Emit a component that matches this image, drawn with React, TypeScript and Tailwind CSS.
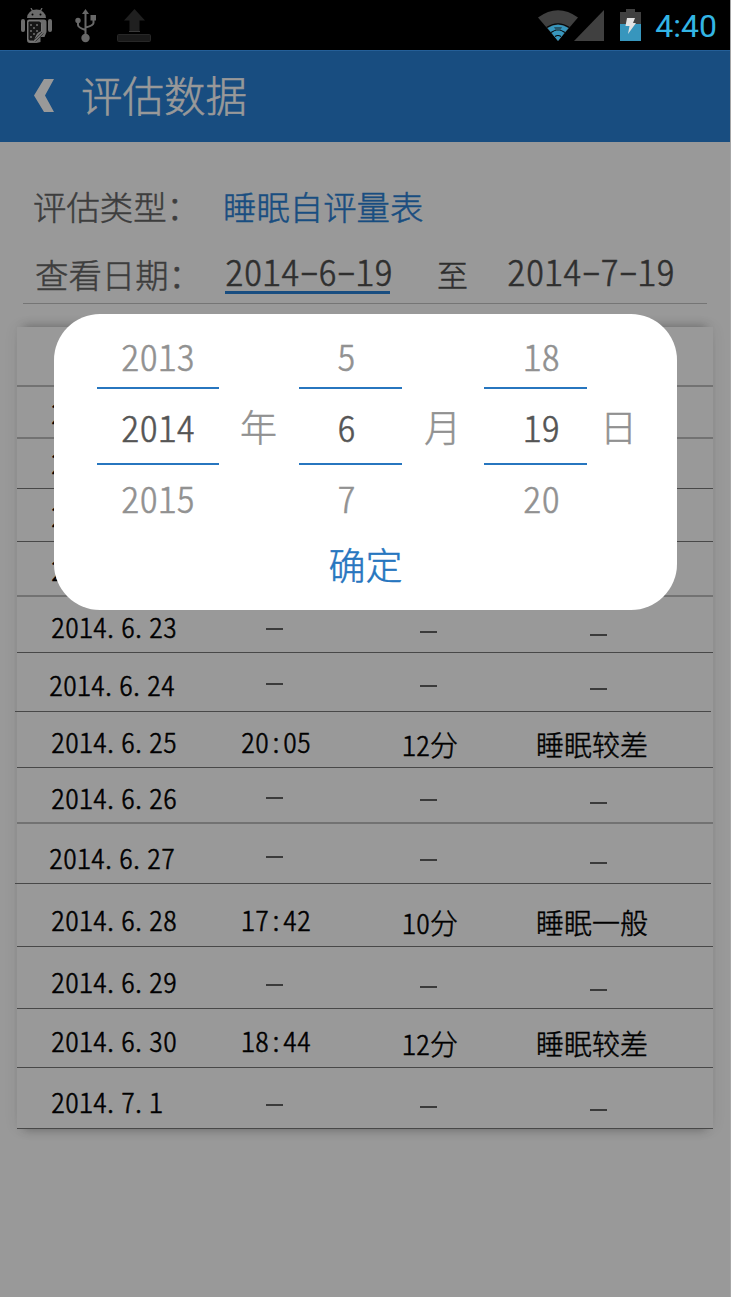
import React from "react";

const TEXT = "[font-family:'Noto_Sans_CJK_SC',sans-serif]";

function Android() {
  return (
    <svg width="32" height="36" viewBox="0 0 32 36">
      <g fill="#6c6c6c">
        <path d="M6 10a9.500 8.500 0 0 1 19 0z" />
        <rect x="0" y="11" width="4" height="13" rx="2" />
        <rect x="27" y="11" width="4" height="13" rx="2" />
        <path d="M8 11.500h15a2.500 2.500 0 0 1 2.500 2.500v10l-2 5h-4v5l-4 1H9a3 3 0 0 1-3-3V13.500a2 2 0 0 1 2-2z" />
      </g>
      <path d="M10 0l2 4M21 0l-2 4" stroke="#6c6c6c" strokeWidth="1.3" />
      <path d="M8.500 13h9.500q2.500 0 2.500 2.500v8q-4 1-5 4t-2.500 5.500H9q-2 0-2-2V14.500q0-1.500 1.500-1.500z" fill="#161616" stroke="#858585" strokeWidth="0.800" />
      <path d="M9 17h2m4 0h2m-5 3h2m-5 3h2m4 0h2m-5 3h2m-5 3h2" stroke="#707070" strokeWidth="1.500" />
      <path d="M12 33l9-9M14.500 33.500l8-8" stroke="#3a3a3a" strokeWidth="1" />
      <circle cx="11.500" cy="6.500" r="1" fill="#000" /><circle cx="19.500" cy="6.500" r="1" fill="#000" />
    </svg>
  );
}

function Usb() {
  return (
    <svg width="22" height="34" viewBox="0 0 22 34" fill="none" stroke="#686868" strokeWidth="2">
      <path d="M10.500 4v24M3 12v4q0 2.500 7.500 5M18.500 9v5q0 2.500-8 4.500" />
      <path d="M10.500 0l3.500 5H7z" fill="#686868" stroke="none" />
      <circle cx="3" cy="11.500" r="2.700" fill="#686868" stroke="none" />
      <rect x="15.500" y="6" width="5.500" height="5.500" fill="#686868" stroke="none" />
      <circle cx="10.500" cy="29" r="4.200" fill="#686868" stroke="none" />
    </svg>
  );
}

function Upload() {
  return (
    <svg width="34" height="34" viewBox="0 0 34 34">
      <path d="M17.500 0l10.500 11.500H22.500v10.500H12.500V11.500H7z" fill="#202020" />
      <path d="M12 22.500h11" stroke="#3a3a3a" />
      <rect x="0.500" y="25.500" width="33" height="7" rx="1" fill="#1a1a1a" stroke="#272727" />
    </svg>
  );
}

function Wifi() {
  return (
    <svg width="40" height="32" viewBox="0 0 40 32">
      <path d="M0 7.500Q20-7 40 7.500L20 31z" fill="#404040" />
      <path d="M9.500 18Q20 11 30.500 18L20 31z" fill="#3796bd" />
      <path d="M8.500 17.500Q20 10 31.500 17.500M13 22.500Q20 17.500 27 22.500M17 26.500q3-2 6 0" fill="none" stroke="#05080a" strokeWidth="1.200" />
      <path d="M16 17l8 0-2 4h-4z" fill="#26566a" />
    </svg>
  );
}

function Battery() {
  return (
    <svg width="22" height="33" viewBox="0 0 22 33">
      <path d="M0 3h6V0h9v3h6v13H0z" fill="#404040" />
      <path d="M0 15h21v17H0z" fill="#3796bd" />
      <path d="M7 9h8l-2 5h3L8 25l1.500-8H5.500z" fill="#e3e3e3" />
    </svg>
  );
}

type Row = { h: string; pad: string; line: string; shift?: string; date: string; time?: string; mins?: string; result?: string; d: [string, string, string] };

const rows: Row[] = [
  { h: "h-[52px]", pad: "pt-[4px]", line: "border-b-2 border-[#727272]", date: "2014.6.19", d: ["", "", ""] },
  { h: "h-[50px]", pad: "pt-[2px]", line: "border-b border-[#484848]", date: "2014.6.20", d: ["", "", ""] },
  { h: "h-[53px]", pad: "pt-[5px]", line: "border-b border-[#484848]", date: "2014.6.21", d: ["", "", ""] },
  { h: "h-[55px]", pad: "pt-[6px]", line: "border-b-2 border-[#727272]", date: "2014.6.22", d: ["", "", ""] },
  { h: "h-[56px]", pad: "pt-[8px]", line: "border-b border-[#484848]", date: "2014.6.23", d: ["mt-[31px]", "mt-[34px]", "mt-[37px]"] },
  { h: "h-[59px]", pad: "pt-[10px]", line: "border-b border-[#484848]", shift: "-ml-[2px] mr-[2px]", date: "2014.6.24", d: ["mt-[30px]", "mt-[32px]", "mt-[35px]"] },
  { h: "h-[56px]", pad: "pt-[8px]", line: "border-b border-[#484848]", date: "2014.6.25", time: "20:05", mins: "12分", result: "睡眠较差", d: ["", "", ""] },
  { h: "h-[56px]", pad: "pt-[8px]", line: "border-b-2 border-[#727272]", date: "2014.6.26", d: ["mt-[29px]", "mt-[31px]", "mt-[34px]"] },
  { h: "h-[60px]", pad: "pt-[12px]", line: "border-b border-[#484848]", shift: "-ml-[2px] mr-[2px]", date: "2014.6.27", d: ["mt-[32px]", "mt-[35px]", "mt-[38px]"] },
  { h: "h-[63px]", pad: "pt-[14px]", line: "border-b border-[#484848]", date: "2014.6.28", time: "17:42", mins: "10分", result: "睡眠一般", d: ["", "", ""] },
  { h: "h-[62px]", pad: "pt-[13px]", line: "border-b border-[#484848]", date: "2014.6.29", d: ["mt-[37px]", "mt-[39px]", "mt-[42px]"] },
  { h: "h-[59px]", pad: "pt-[10px]", line: "border-b border-[#484848]", date: "2014.6.30", time: "18:44", mins: "12分", result: "睡眠较差", d: ["", "", ""] },
  { h: "h-[61px]", pad: "pt-[12px]", line: "border-b border-[#484848]", date: "2014.7.1", d: ["mt-[36px]", "mt-[38px]", "mt-[41px]"] },
];

function Dash({ offset }: { offset: string }) {
  return offset ? <span className={`block h-[2px] w-[17px] bg-[#3b3b3b] ${offset}`} /> : null;
}

// Full stops sit toward the left of a half-width cell.
function DottedDate({ value }: { value: string }) {
  return (
    <>
      {value.split(".").map((part, i) => (
        <React.Fragment key={i}>
          {i > 0 && <span className="inline-block w-[14px] text-left [font-feature-settings:normal]">.</span>}
          {part}
        </React.Fragment>
      ))}
    </>
  );
}

function DashedDate({ value }: { value: string }) {
  return (
    <>
      {value.split("-").map((part, i) => (
        <React.Fragment key={i}>
          {i > 0 && <span className="inline-block origin-center -translate-y-[2px] scale-x-140">-</span>}
          {part}
        </React.Fragment>
      ))}
    </>
  );
}

function RecordRow({ row }: { row: Row }) {
  const left = row.shift ? "w-[216px]" : "w-[214px]";
  const filled = row.d[0] !== "" || row.time !== undefined;
  return (
    <div className={`flex shrink-0 ${row.h} ${row.line} ${row.shift ?? ""}`}>
      <div className={`shrink-0 pl-[34px] ${left} ${row.pad}`}>{filled ? <DottedDate value={row.date} /> : row.date}</div>
      <div className="w-[172px] shrink-0 pl-[35px]">
        {row.time ? <div className={`-ml-[25px] ${row.pad}`}>{row.time}</div> : <Dash offset={row.d[0]} />}
      </div>
      <div className="w-[128px] shrink-0 pl-[17px]">
        {row.mins ? <div className={`mt-[3px] -ml-[18px] ${row.pad}`}>{row.mins}</div> : <Dash offset={row.d[1]} />}
      </div>
      <div className="flex-1 pl-[59px]">
        {row.result ? <div className={`mt-[3px] -ml-[54px] whitespace-nowrap ${row.pad}`}>{row.result}</div> : <Dash offset={row.d[2]} />}
      </div>
    </div>
  );
}

function Wheel({ values, width, nudge }: { values: string[]; width: string; nudge: string }) {
  return (
    <div className={`flex flex-col text-center text-[37px] leading-[72px] text-[#919191] ${width}`}>
      <div className="h-[73px] border-b-2 border-[#2776bf]"><div className={`pt-[3px] ${nudge}`}>{values[0]}</div></div>
      <div className="h-[76px] border-b-2 border-[#2776bf] text-[#555]">
        <div className={`leading-[74px] ${nudge}`}>{values[1]}</div>
      </div>
      <div className={`-mt-[4px] ${nudge}`}>{values[2]}</div>
    </div>
  );
}

export default function App() {
  return (
    <div className={`relative flex h-[1297px] w-[731px] flex-col overflow-hidden border-r border-[#a6a6a6] bg-[#999] font-light [-webkit-text-stroke-width:0.5px] [font-feature-settings:'hwid'] ${TEXT}`}>
      <div className="flex h-[50px] shrink-0 bg-black">
        <div className="ml-[21px] mt-[8px] w-[54px]"><Android /></div>
        <div className="mt-[9px] w-[42px]"><Usb /></div>
        <div className="mt-[9px]"><Upload /></div>
        <div className="ml-auto mt-[10px] mr-[-4px]"><Wifi /></div>
        <svg className="mt-[10px]" width="30" height="31" viewBox="0 0 30 31"><path d="M30 0v31H0z" fill="#404040" /></svg>
        <div className="ml-[16px] mt-[9px]"><Battery /></div>
        <div className="ml-[13px] mr-[13px] mt-[5px] text-[32px] leading-[43px] font-normal text-[#33b5e5] [-webkit-text-stroke-width:0px] [font-family:Roboto,sans-serif]">4:40</div>
      </div>
      <header className="flex h-[92px] shrink-0 items-center border-t border-[#245f98] bg-[#184d80] text-[#999]">
        <svg className="ml-[34px] mt-[-2px]" width="20" height="33" viewBox="0 0 20 33"><path d="M10 0h10l-9 16.500L20 33H10L0 16.500z" fill="#999" /></svg>
        <h1 className="-mt-[5px] ml-[27px] text-[41.500px] leading-[60px] [-webkit-text-stroke-width:0.6px]">评估数据</h1>
      </header>
      <div className="flex h-[66px] shrink-0 pt-[31px] pl-[33px] text-[33.400px] leading-[66px]">
        <div className="h-[66px] w-[190px] shrink-0 text-[#3d3d3d]">评估类型：</div>
        <div className="text-[#184d80]">睡眠自评量表</div>
      </div>
      <div className="ml-[23px] flex h-[96px] w-[684px] shrink-0 border-b border-[#757575] pl-[12px] text-[#2f2f2f]">
        <div className="mt-[33px] w-[190px] shrink-0 text-[33.400px] leading-[66px] text-[#3d3d3d]">查看日期：</div>
        <div className="mt-[41px] h-[45px] w-[165px] border-b-[3px] border-[#184d80] text-[37.300px] leading-[42px] whitespace-nowrap"><DashedDate value="2014-6-19" /></div>
        <div className="mt-[33px] ml-[47px] w-[70px] text-[31px] leading-[66px]">至</div>
        <div className="mt-[41px] text-[37.300px] leading-[42px] whitespace-nowrap"><DashedDate value="2014-7-19" /></div>
      </div>
      <main className="mt-[23px] ml-[17px] flex h-[802px] w-[696px] shrink-0 flex-col bg-[#999] text-[28px] leading-[42px] text-black shadow-[0_0_14px_rgba(0,0,0,0.07),0_8px_9px_-7px_rgba(0,0,0,0.25),0_-8px_9px_-7px_rgba(0,0,0,0.25)]">
        <div className="h-[60px] shrink-0 border-b-2 border-[#727272]" />
        {rows.map((row) => <RecordRow key={row.date} row={row} />)}
      </main>
      <div className="absolute top-[314px] left-[54px] flex h-[296px] w-[623px] flex-col rounded-[46px] bg-white">
        <div className="flex h-[220px] pt-[2px] pl-[43px] text-[37px] leading-[72px] text-[#919191]">
          <Wheel width="w-[122px]" nudge="pl-0" values={["2013", "2014", "2015"]} />
          <div className="w-[80px] pt-[74px] pl-[21px]">年</div>
          <Wheel width="w-[103px]" nudge="pr-[8px]" values={["5", "6", "7"]} />
          <div className="w-[82px] pt-[74px] pl-[22px]">月</div>
          <Wheel width="w-[103px]" nudge="pl-[12px]" values={["18", "19", "20"]} />
          <div className="pt-[74px] pl-[13px]">日</div>
        </div>
        <button className="h-[60px] text-[37px] leading-[60px] text-[#2776bf]">确定</button>
      </div>
    </div>
  );
}
